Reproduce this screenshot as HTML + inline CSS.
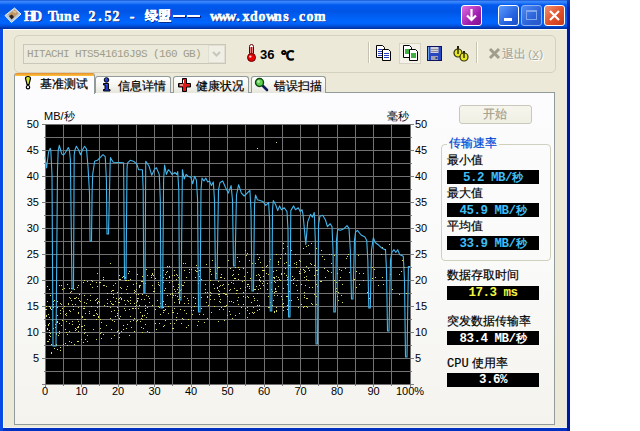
<!DOCTYPE html>
<html><head><meta charset="utf-8">
<style>
*{margin:0;padding:0;box-sizing:border-box}
html,body{width:640px;height:431px;overflow:hidden;background:#fff;font-family:"Liberation Sans",sans-serif;font-size:12px;color:#000}
.a{position:absolute}
#win{position:absolute;left:0;top:0;width:570px;height:431px;background:linear-gradient(90deg,#0A4AE4 0,#0A4AE4 3px,#0030C0 3px,#0030C0 567px,#001898 567px)}
#title{position:absolute;left:0;top:0;width:570px;height:29px;background:linear-gradient(#0A3FC4 0px,#3D8CFF 1px,#2A78F8 3px,#0058EE 5px,#0055E6 12px,#0062F8 18px,#0066FF 23px,#0050DC 26px,#0038B0 28px,#00309a 29px)}
#client{position:absolute;left:3px;top:29px;width:564px;height:399px;background:#ECE9D8;border-top:1px solid #fff;border-left:1px solid #F4F6FA;border-right:1px solid #DCE6F4;border-bottom:1px solid #F0F2F6}
.lbl{position:absolute;font-size:11px;line-height:13px;white-space:nowrap}
.tt i{font-style:normal;display:inline-block;width:8px;text-align:center}
.tt{position:absolute;font-family:"Liberation Serif",serif;font-weight:bold;font-size:14px;line-height:16px;-webkit-text-stroke:0.5px #fff;color:#fff;text-shadow:1px 1px 0 #0A1E80;white-space:nowrap}
.cj{position:absolute;font-size:12px;line-height:14px;white-space:nowrap;-webkit-text-stroke:0.2px currentColor}
.tab{position:absolute;top:76px;height:17px;border:1px solid #919B9C;border-bottom:none;border-radius:3px 3px 0 0;background:linear-gradient(#FFFFFF,#F3F3EF 60%,#E6E5DC)}
.box{position:absolute;left:447px;width:92px;height:14px;background:#000;font-family:"Liberation Mono",monospace;font-weight:bold;font-size:12.5px;letter-spacing:-0.5px;line-height:15px;text-align:center;white-space:nowrap}
.box b{font-family:"Liberation Sans",sans-serif;font-size:11px;letter-spacing:0}
.btn{position:absolute;top:5px;width:21px;height:21px;border:1px solid #fff;border-radius:3px}
</style></head><body>
<div id="win">
 <div id="title"></div>
 <div id="client"></div>
 <div class="a" style="left:567px;top:0;width:3px;height:29px;background:linear-gradient(#1040C8,#0022B0 30%,#0018A0)"></div>
 <!-- title icon -->
 <svg class="a" style="left:0;top:0" width="24" height="26" viewBox="0 0 24 26">
  <path d="M5 15.5 L14.5 8 L21 14 L11.5 22.5 Z" fill="#B8C8D8" stroke="#E8F0FF" stroke-width="1"/>
  <path d="M8 14.5 L14.5 9.5 L18.5 13.5 L12 19 Z" fill="#C09868"/>
  <path d="M9 16 L12 14.5 L14 17 L11.5 19.5 Z" fill="#2A2018"/>
  <path d="M13 11 l3 1.5" stroke="#E0C8A0" stroke-width="1.5"/>
 </svg>
 <div class="tt" style="left:24px;top:9px"><i>H</i><i>D</i><i>&nbsp;</i><i>T</i><i>u</i><i>n</i><i>e</i><i>&nbsp;</i><i>2</i><i>.</i><i>5</i><i>2</i><i>&nbsp;</i><i>-</i></div>
 <div class="tt" style="left:145px;top:7px;font-family:'Liberation Sans',sans-serif;font-size:13px;line-height:18px;letter-spacing:0px;-webkit-text-stroke:0.4px #fff">绿盟</div>
 <div class="a" style="left:173px;top:15px;width:12px;height:2px;background:#fff;box-shadow:1px 1px 0 #0A1E80"></div>
 <div class="a" style="left:187px;top:15px;width:13px;height:2px;background:#fff;box-shadow:1px 1px 0 #0A1E80"></div>
 <div class="tt" style="left:210px;top:9px"><i>w</i><i>w</i><i>w</i><i>.</i><i>x</i><i>d</i><i>o</i><i>w</i><i>n</i><i>s</i><i>.</i><i>c</i><i>o</i><i>m</i></div>
 <!-- title buttons -->
 <div class="btn" style="left:461px;background:linear-gradient(135deg,#E070E0,#A020B0 60%,#801090)"></div>
 <svg class="a" style="left:461px;top:5px" width="21" height="21"><path d="M10.5 4v11M6 10.5l4.5 4.5 4.5-4.5" stroke="#fff" stroke-width="2.2" fill="none"/></svg>
 <div class="btn" style="left:498px;background:linear-gradient(135deg,#5C9BFF,#2663E0 60%,#1A50C8)"></div>
 <div class="a" style="left:504px;top:18px;width:8px;height:3px;background:#fff"></div>
 <div class="btn" style="left:521px;background:linear-gradient(135deg,#4F8CF5,#2B62D8 60%,#2456C8);border-color:#8FB0F0"></div>
 <div class="a" style="left:526px;top:10px;width:11px;height:10px;border:1px solid #7FA6EE;border-top-width:2px"></div>
 <div class="btn" style="left:544px;background:linear-gradient(135deg,#F09070,#E0502A 55%,#C83A18)"></div>
 <svg class="a" style="left:544px;top:5px" width="21" height="21"><path d="M6 6l9 9M15 6l-9 9" stroke="#fff" stroke-width="2.2"/></svg>

 <!-- toolbar panel -->
 <div class="a" style="left:14px;top:35px;width:542px;height:38px;border:1px solid #D5D1BF;border-radius:5px;background:#ECE9D8"></div>
 <div class="a" style="left:23px;top:44px;width:203px;height:20px;border:1px solid #C9C7BA;background:#EBEADB"></div>
 <div class="a" style="left:27px;top:47px;font-family:'Liberation Mono',monospace;font-size:11px;letter-spacing:-0.6px;line-height:14px;color:#A09D88;white-space:nowrap">HITACHI HTS541616J9S (160 GB)</div>
 <div class="a" style="left:208px;top:45px;width:17px;height:18px;background:#F0EFE6;border:1px solid #E0DFD2"></div>
 <svg class="a" style="left:208px;top:45px" width="17" height="18"><path d="M5 7l3.5 3.5L12 7" stroke="#C9C7BA" stroke-width="2" fill="none"/></svg>
 <!-- thermometer -->
 <svg class="a" style="left:246px;top:44px" width="11" height="18" viewBox="0 0 11 18">
  <rect x="3.5" y="0.5" width="4" height="11" rx="2" fill="#fff" stroke="#600" stroke-width="1"/>
  <rect x="4.5" y="3" width="2" height="9" fill="#d00"/>
  <circle cx="5.5" cy="13.5" r="4" fill="#e00" stroke="#600" stroke-width="1"/>
  <circle cx="4.3" cy="12.6" r="1.2" fill="#fcc"/>
 </svg>
 <div class="a" style="left:260px;top:48px;font-weight:bold;font-size:13px;line-height:14px">36</div>
 <div class="a" style="left:281px;top:49px;font-weight:bold;font-size:13px;line-height:14px;-webkit-text-stroke:0.4px #000">℃</div>
 <!-- separators -->
 <div class="a" style="left:368px;top:42px;width:1px;height:21px;background:#C5C2B2;box-shadow:1px 0 0 #fff"></div>
 <div class="a" style="left:476px;top:42px;width:1px;height:21px;background:#C5C2B2;box-shadow:1px 0 0 #fff"></div>
 <!-- toolbar icons -->
 <svg class="a" style="left:375px;top:45px" width="18" height="16" viewBox="0 0 18 16">
  <path d="M1.5 0.5h6l2 2v10h-8z" fill="#fff" stroke="#000"/>
  <path d="M3 4.5h4M3 6.5h4M3 8.5h4M3 10.5h4" stroke="#2840c0"/>
  <path d="M7.5 4.5h6l2 2v9h-8z" fill="#fff" stroke="#000"/>
  <path d="M9 8.5h5M9 10.5h5M9 12.5h5" stroke="#2840c0"/>
 </svg>
 <div class="a" style="left:399px;top:43px;width:22px;height:21px;border:1px solid #D8D4C4;background:#F4F2E8"></div>
 <svg class="a" style="left:402px;top:45px" width="18" height="16" viewBox="0 0 18 16">
  <path d="M1.5 0.5h6l2 2v10h-8z" fill="#fff" stroke="#000"/>
  <rect x="3" y="4" width="4" height="5" fill="#40b040"/>
  <path d="M7.5 4.5h6l2 2v9h-8z" fill="#fff" stroke="#000"/>
  <rect x="9" y="8" width="5" height="5" fill="#40b040"/>
 </svg>
 <svg class="a" style="left:427px;top:46px" width="16" height="15" viewBox="0 0 16 15">
  <rect x="0.5" y="0.5" width="14" height="14" fill="#2846C0" stroke="#0A1460"/>
  <path d="M1.5 1v13" stroke="#70A0F0"/>
  <rect x="3.5" y="1" width="8" height="6" fill="#D0D0D8"/>
  <path d="M4 3.5h7M4 5.5h7" stroke="#9090A0"/>
  <rect x="4" y="10" width="7" height="4" fill="#A0A0B0"/>
  <rect x="8.5" y="11" width="2" height="2" fill="#304080"/>
 </svg>
 <svg class="a" style="left:452px;top:45px" width="18" height="17" viewBox="0 0 18 17">
  <path d="M6 1v6M12 6v6" stroke="#202010" stroke-width="2"/>
  <circle cx="6" cy="8" r="4" fill="#E8E820" stroke="#303010" stroke-width="1.2"/>
  <circle cx="12" cy="12" r="4" fill="#E8E820" stroke="#303010" stroke-width="1.2"/>
  <path d="M6 4v5M12 8v5" stroke="#303010" stroke-width="1.5"/>
 </svg>
 <svg class="a" style="left:488px;top:47px" width="13" height="13" viewBox="0 0 13 13"><path d="M2 2l9 9M11 2l-9 9" stroke="#A09D8E" stroke-width="3"/></svg>
 <div class="cj" style="left:502px;top:47px;color:#A8A598;text-shadow:1px 1px 0 #fff">退出</div>
 <div class="a" style="left:527px;top:48px;font-family:'Liberation Mono',monospace;font-size:11px;letter-spacing:-1.2px;line-height:14px;color:#A8A598;text-shadow:1px 1px 0 #fff">(<u>X</u>)</div>

 <!-- tab panel -->
 <div class="a" style="left:14px;top:92px;width:541px;height:333px;border:1px solid #919B9C;border-right-color:#919B9C;background:linear-gradient(#FCFCFE,#FAFAF9 50%,#F4F3EE)"></div>
 <div class="tab" style="left:95px;width:76px"></div>
 <div class="tab" style="left:173px;width:76px"></div>
 <div class="tab" style="left:251px;width:75px"></div>
 <div class="a" style="left:14px;top:73px;width:81px;height:21px;border:1px solid #919B9C;border-bottom:none;border-radius:3px 3px 0 0;background:#FCFCFE"></div>
 <div class="a" style="left:15px;top:73px;width:79px;height:3px;background:linear-gradient(#E68B2C,#FFC73C);border-radius:2px 2px 0 0"></div>
 <!-- tab icons -->
 <svg class="a" style="left:20px;top:74px" width="16" height="18" viewBox="0 0 16 18"><path d="M5.5 4.5Q5.5 2.5 8 2.5Q10.5 2.5 10.5 4.5L9 10.5H7Z" fill="#D8E030" stroke="#000" stroke-width="1.2"/><circle cx="8" cy="13.2" r="1.7" fill="#fff" stroke="#000" stroke-width="1.2"/></svg>
 <div class="cj" style="left:40px;top:77px">基准测试</div>
 <svg class="a" style="left:102px;top:77px" width="9" height="15" viewBox="0 0 9 15"><circle cx="4.5" cy="3" r="2.3" fill="#1838D8" stroke="#000" stroke-width="1"/><path d="M1.5 6.5h5v6h1.5v1.5h-6.5v-1.5h1.5v-4.5h-1.5z" fill="#1838D8" stroke="#000" stroke-width="1"/><path d="M3.6 2.3l0.8-0.6M4.3 8l0.6-0.6" stroke="#A0B8FF" stroke-width="0.9"/></svg>
 <div class="cj" style="left:118px;top:79px">信息详情</div>
 <svg class="a" style="left:178px;top:78px" width="13" height="14" viewBox="0 0 13 14"><path d="M4.5 0.5h4v5h4v3.5h-4v4.5h-4v-4.5h-4v-3.5h4z" fill="#E01818" stroke="#000" stroke-width="1"/><path d="M2 7h3M5.5 2v3" stroke="#fff" stroke-width="1"/></svg>
 <div class="cj" style="left:196px;top:79px">健康状况</div>
 <svg class="a" style="left:254px;top:77px" width="15" height="15" viewBox="0 0 15 15"><path d="M8.5 8.5l4.5 4.5" stroke="#101858" stroke-width="2.6" stroke-linecap="round"/><circle cx="5.5" cy="5.5" r="4" fill="#5CD050" stroke="#0E4A10" stroke-width="1.4"/><circle cx="4.5" cy="4.5" r="1.3" fill="#C8F0B0"/></svg>
 <div class="cj" style="left:274px;top:79px">错误扫描</div>

 <!-- chart -->
 <svg class="a" style="left:0;top:0" width="640" height="431" shape-rendering="crispEdges">
<rect x="45" y="124" width="366" height="261" fill="#000"/>
<path d="M45.5 124V385M63.5 124V385M81.5 124V385M99.5 124V385M118.5 124V385M136.5 124V385M154.5 124V385M172.5 124V385M191.5 124V385M209.5 124V385M227.5 124V385M245.5 124V385M264.5 124V385M282.5 124V385M300.5 124V385M318.5 124V385M337.5 124V385M355.5 124V385M373.5 124V385M391.5 124V385M410.5 124V385M45 124.5H411M45 137.5H411M45 150.5H411M45 163.5H411M45 176.5H411M45 189.5H411M45 202.5H411M45 215.5H411M45 228.5H411M45 241.5H411M45 254.5H411M45 267.5H411M45 280.5H411M45 293.5H411M45 306.5H411M45 319.5H411M45 332.5H411M45 345.5H411M45 358.5H411M45 371.5H411M45 384.5H411" stroke="#727272" stroke-width="1" fill="none"/>
<path d="M42 124.5H45M411 124.5H414M44 137.5H45M411 137.5H412M42 150.5H45M411 150.5H414M44 163.5H45M411 163.5H412M42 176.5H45M411 176.5H414M44 189.5H45M411 189.5H412M42 202.5H45M411 202.5H414M44 215.5H45M411 215.5H412M42 228.5H45M411 228.5H414M44 241.5H45M411 241.5H412M42 254.5H45M411 254.5H414M44 267.5H45M411 267.5H412M42 280.5H45M411 280.5H414M44 293.5H45M411 293.5H412M42 306.5H45M411 306.5H414M44 319.5H45M411 319.5H412M42 332.5H45M411 332.5H414M44 345.5H45M411 345.5H412M42 358.5H45M411 358.5H414M44 371.5H45M411 371.5H412M42 384.5H45M411 384.5H414M45.5 385V387M63.5 385V386M81.5 385V387M99.5 385V386M118.5 385V387M136.5 385V386M154.5 385V387M172.5 385V386M191.5 385V387M209.5 385V386M227.5 385V387M245.5 385V386M264.5 385V387M282.5 385V386M300.5 385V387M318.5 385V386M337.5 385V387M355.5 385V386M373.5 385V387M391.5 385V386M410.5 385V387" stroke="#808080" stroke-width="1" fill="none"/>
<path d="M45 309h1v1h-1zM45 325h1v1h-1zM46 306h1v1h-1zM46 309h1v1h-1zM46 315h1v1h-1zM46 316h1v1h-1zM47 286h1v1h-1zM47 301h1v1h-1zM47 328h1v1h-1zM47 329h1v1h-1zM47 341h1v1h-1zM48 314h1v1h-1zM48 324h1v1h-1zM48 325h1v1h-1zM48 341h1v1h-1zM49 289h1v1h-1zM49 306h1v1h-1zM49 317h1v1h-1zM49 323h1v1h-1zM49 330h1v1h-1zM49 332h1v1h-1zM49 335h1v1h-1zM49 339h1v1h-1zM50 295h1v1h-1zM50 307h1v1h-1zM50 308h1v1h-1zM50 333h1v1h-1zM50 336h1v1h-1zM51 309h1v1h-1zM51 344h1v1h-1zM51 352h1v1h-1zM51 353h1v1h-1zM52 306h1v1h-1zM52 320h1v1h-1zM53 301h1v1h-1zM53 304h1v1h-1zM53 307h1v1h-1zM53 328h1v1h-1zM54 300h1v1h-1zM54 348h1v1h-1zM55 324h1v1h-1zM55 327h1v1h-1zM56 283h1v1h-1zM56 319h1v1h-1zM56 322h1v1h-1zM56 333h1v1h-1zM56 334h1v1h-1zM56 344h1v1h-1zM56 345h1v1h-1zM57 301h1v1h-1zM57 307h1v1h-1zM57 315h1v1h-1zM57 321h1v1h-1zM57 322h1v1h-1zM57 349h1v1h-1zM58 335h1v1h-1zM59 285h1v1h-1zM59 323h1v1h-1zM59 331h1v1h-1zM59 333h1v1h-1zM60 303h1v1h-1zM60 310h1v1h-1zM60 313h1v1h-1zM60 347h1v1h-1zM60 350h1v1h-1zM61 285h1v1h-1zM61 304h1v1h-1zM61 325h1v1h-1zM62 289h1v1h-1zM62 308h1v1h-1zM62 320h1v1h-1zM63 311h1v1h-1zM63 344h1v1h-1zM64 288h1v1h-1zM64 306h1v1h-1zM65 314h1v1h-1zM65 329h1v1h-1zM65 343h1v1h-1zM66 313h1v1h-1zM66 315h1v1h-1zM66 321h1v1h-1zM66 332h1v1h-1zM67 284h1v1h-1zM67 334h1v1h-1zM67 345h1v1h-1zM68 303h1v1h-1zM68 304h1v1h-1zM69 288h1v1h-1zM69 297h1v1h-1zM69 310h1v1h-1zM69 323h1v1h-1zM69 331h1v1h-1zM69 341h1v1h-1zM70 292h1v1h-1zM70 298h1v1h-1zM70 311h1v1h-1zM71 288h1v1h-1zM71 291h1v1h-1zM71 300h1v1h-1zM71 342h1v1h-1zM72 304h1v1h-1zM72 321h1v1h-1zM72 324h1v1h-1zM73 306h1v1h-1zM73 309h1v1h-1zM74 289h1v1h-1zM74 298h1v1h-1zM74 344h1v1h-1zM75 298h1v1h-1zM75 304h1v1h-1zM75 328h1v1h-1zM75 330h1v1h-1zM76 297h1v1h-1zM76 329h1v1h-1zM77 287h1v1h-1zM77 319h1v1h-1zM77 327h1v1h-1zM77 341h1v1h-1zM78 285h1v1h-1zM78 298h1v1h-1zM78 307h1v1h-1zM78 312h1v1h-1zM78 313h1v1h-1zM78 321h1v1h-1zM78 326h1v1h-1zM78 327h1v1h-1zM78 331h1v1h-1zM78 341h1v1h-1zM79 294h1v1h-1zM79 300h1v1h-1zM79 324h1v1h-1zM80 301h1v1h-1zM81 306h1v1h-1zM81 326h1v1h-1zM81 339h1v1h-1zM82 316h1v1h-1zM82 317h1v1h-1zM82 326h1v1h-1zM83 282h1v1h-1zM83 308h1v1h-1zM83 342h1v1h-1zM84 280h1v1h-1zM84 295h1v1h-1zM84 302h1v1h-1zM84 306h1v1h-1zM84 308h1v1h-1zM84 319h1v1h-1zM84 325h1v1h-1zM84 329h1v1h-1zM84 333h1v1h-1zM85 313h1v1h-1zM85 319h1v1h-1zM85 332h1v1h-1zM85 339h1v1h-1zM86 303h1v1h-1zM87 281h1v1h-1zM87 299h1v1h-1zM87 335h1v1h-1zM87 341h1v1h-1zM89 311h1v1h-1zM89 313h1v1h-1zM90 284h1v1h-1zM90 295h1v1h-1zM90 300h1v1h-1zM91 280h1v1h-1zM91 306h1v1h-1zM92 281h1v1h-1zM92 287h1v1h-1zM93 315h1v1h-1zM93 329h1v1h-1zM94 315h1v1h-1zM95 300h1v1h-1zM95 310h1v1h-1zM96 282h1v1h-1zM96 299h1v1h-1zM96 313h1v1h-1zM96 319h1v1h-1zM96 339h1v1h-1zM97 273h1v1h-1zM97 286h1v1h-1zM97 298h1v1h-1zM97 302h1v1h-1zM97 303h1v1h-1zM97 307h1v1h-1zM97 314h1v1h-1zM98 301h1v1h-1zM98 316h1v1h-1zM98 317h1v1h-1zM99 282h1v1h-1zM99 302h1v1h-1zM99 306h1v1h-1zM100 282h1v1h-1zM100 319h1v1h-1zM100 328h1v1h-1zM100 333h1v1h-1zM101 322h1v1h-1zM101 332h1v1h-1zM101 338h1v1h-1zM103 277h1v1h-1zM103 279h1v1h-1zM103 285h1v1h-1zM103 334h1v1h-1zM104 285h1v1h-1zM104 305h1v1h-1zM106 286h1v1h-1zM106 325h1v1h-1zM107 293h1v1h-1zM107 299h1v1h-1zM107 303h1v1h-1zM107 306h1v1h-1zM110 263h1v1h-1zM110 301h1v1h-1zM110 307h1v1h-1zM110 318h1v1h-1zM111 291h1v1h-1zM111 293h1v1h-1zM111 303h1v1h-1zM111 311h1v1h-1zM111 329h1v1h-1zM111 338h1v1h-1zM112 290h1v1h-1zM112 304h1v1h-1zM112 320h1v1h-1zM113 285h1v1h-1zM113 290h1v1h-1zM113 294h1v1h-1zM113 297h1v1h-1zM113 304h1v1h-1zM114 310h1v1h-1zM114 321h1v1h-1zM114 335h1v1h-1zM115 283h1v1h-1zM115 301h1v1h-1zM115 316h1v1h-1zM116 298h1v1h-1zM117 292h1v1h-1zM117 307h1v1h-1zM117 313h1v1h-1zM117 315h1v1h-1zM117 331h1v1h-1zM118 299h1v1h-1zM118 302h1v1h-1zM118 310h1v1h-1zM118 330h1v1h-1zM119 275h1v1h-1zM119 279h1v1h-1zM119 298h1v1h-1zM119 302h1v1h-1zM119 318h1v1h-1zM119 333h1v1h-1zM119 337h1v1h-1zM120 279h1v1h-1zM120 287h1v1h-1zM120 297h1v1h-1zM120 316h1v1h-1zM121 288h1v1h-1zM121 293h1v1h-1zM121 298h1v1h-1zM121 299h1v1h-1zM121 331h1v1h-1zM122 277h1v1h-1zM123 276h1v1h-1zM123 325h1v1h-1zM123 329h1v1h-1zM124 300h1v1h-1zM124 308h1v1h-1zM125 277h1v1h-1zM125 280h1v1h-1zM125 304h1v1h-1zM125 310h1v1h-1zM126 280h1v1h-1zM126 289h1v1h-1zM126 328h1v1h-1zM127 286h1v1h-1zM127 293h1v1h-1zM127 300h1v1h-1zM127 324h1v1h-1zM128 273h1v1h-1zM128 280h1v1h-1zM128 301h1v1h-1zM129 271h1v1h-1zM129 309h1v1h-1zM129 335h1v1h-1zM130 279h1v1h-1zM130 297h1v1h-1zM130 300h1v1h-1zM130 303h1v1h-1zM130 316h1v1h-1zM130 321h1v1h-1zM131 327h1v1h-1zM132 308h1v1h-1zM133 284h1v1h-1zM133 308h1v1h-1zM133 320h1v1h-1zM134 290h1v1h-1zM134 292h1v1h-1zM134 303h1v1h-1zM134 318h1v1h-1zM134 331h1v1h-1zM135 291h1v1h-1zM135 306h1v1h-1zM135 308h1v1h-1zM136 283h1v1h-1zM136 289h1v1h-1zM136 294h1v1h-1zM136 302h1v1h-1zM136 305h1v1h-1zM136 321h1v1h-1zM137 274h1v1h-1zM137 298h1v1h-1zM137 300h1v1h-1zM137 301h1v1h-1zM137 320h1v1h-1zM138 294h1v1h-1zM138 298h1v1h-1zM138 308h1v1h-1zM139 285h1v1h-1zM139 286h1v1h-1zM139 287h1v1h-1zM139 305h1v1h-1zM140 285h1v1h-1zM140 312h1v1h-1zM140 321h1v1h-1zM141 281h1v1h-1zM141 299h1v1h-1zM141 318h1v1h-1zM141 327h1v1h-1zM142 276h1v1h-1zM142 281h1v1h-1zM142 294h1v1h-1zM142 315h1v1h-1zM142 316h1v1h-1zM142 319h1v1h-1zM142 332h1v1h-1zM143 283h1v1h-1zM143 328h1v1h-1zM144 299h1v1h-1zM144 315h1v1h-1zM145 283h1v1h-1zM145 305h1v1h-1zM145 308h1v1h-1zM145 310h1v1h-1zM145 324h1v1h-1zM146 269h1v1h-1zM146 295h1v1h-1zM146 317h1v1h-1zM147 275h1v1h-1zM147 307h1v1h-1zM147 313h1v1h-1zM147 331h1v1h-1zM148 296h1v1h-1zM149 298h1v1h-1zM149 302h1v1h-1zM149 332h1v1h-1zM151 275h1v1h-1zM151 277h1v1h-1zM152 273h1v1h-1zM152 274h1v1h-1zM152 285h1v1h-1zM152 305h1v1h-1zM153 275h1v1h-1zM153 291h1v1h-1zM154 269h1v1h-1zM154 288h1v1h-1zM154 291h1v1h-1zM155 278h1v1h-1zM155 309h1v1h-1zM155 323h1v1h-1zM156 329h1v1h-1zM157 300h1v1h-1zM158 282h1v1h-1zM158 284h1v1h-1zM158 306h1v1h-1zM159 285h1v1h-1zM159 307h1v1h-1zM159 323h1v1h-1zM160 275h1v1h-1zM160 291h1v1h-1zM160 303h1v1h-1zM160 314h1v1h-1zM163 270h1v1h-1zM163 277h1v1h-1zM163 282h1v1h-1zM163 301h1v1h-1zM163 307h1v1h-1zM163 310h1v1h-1zM163 312h1v1h-1zM163 326h1v1h-1zM164 290h1v1h-1zM164 310h1v1h-1zM164 325h1v1h-1zM165 274h1v1h-1zM165 288h1v1h-1zM165 304h1v1h-1zM165 309h1v1h-1zM165 320h1v1h-1zM166 272h1v1h-1zM166 278h1v1h-1zM167 266h1v1h-1zM167 271h1v1h-1zM167 295h1v1h-1zM168 306h1v1h-1zM168 313h1v1h-1zM169 266h1v1h-1zM169 276h1v1h-1zM169 277h1v1h-1zM169 282h1v1h-1zM170 294h1v1h-1zM170 323h1v1h-1zM172 275h1v1h-1zM172 281h1v1h-1zM172 293h1v1h-1zM172 294h1v1h-1zM172 297h1v1h-1zM172 310h1v1h-1zM172 312h1v1h-1zM172 328h1v1h-1zM173 286h1v1h-1zM173 295h1v1h-1zM173 312h1v1h-1zM173 328h1v1h-1zM174 270h1v1h-1zM174 275h1v1h-1zM174 289h1v1h-1zM174 302h1v1h-1zM174 308h1v1h-1zM174 323h1v1h-1zM175 291h1v1h-1zM175 295h1v1h-1zM176 274h1v1h-1zM176 279h1v1h-1zM176 317h1v1h-1zM176 320h1v1h-1zM177 275h1v1h-1zM177 289h1v1h-1zM177 296h1v1h-1zM177 313h1v1h-1zM178 277h1v1h-1zM178 284h1v1h-1zM178 287h1v1h-1zM178 292h1v1h-1zM178 299h1v1h-1zM179 278h1v1h-1zM179 285h1v1h-1zM179 294h1v1h-1zM179 301h1v1h-1zM179 302h1v1h-1zM179 303h1v1h-1zM180 290h1v1h-1zM180 297h1v1h-1zM180 309h1v1h-1zM181 284h1v1h-1zM181 289h1v1h-1zM181 323h1v1h-1zM182 285h1v1h-1zM182 318h1v1h-1zM183 263h1v1h-1zM183 285h1v1h-1zM183 319h1v1h-1zM184 270h1v1h-1zM184 282h1v1h-1zM184 296h1v1h-1zM184 303h1v1h-1zM184 310h1v1h-1zM185 263h1v1h-1zM186 277h1v1h-1zM186 313h1v1h-1zM186 327h1v1h-1zM187 298h1v1h-1zM188 300h1v1h-1zM188 303h1v1h-1zM188 319h1v1h-1zM188 325h1v1h-1zM189 269h1v1h-1zM189 272h1v1h-1zM191 269h1v1h-1zM191 307h1v1h-1zM191 310h1v1h-1zM192 314h1v1h-1zM193 297h1v1h-1zM193 310h1v1h-1zM194 306h1v1h-1zM195 270h1v1h-1zM195 277h1v1h-1zM195 298h1v1h-1zM195 303h1v1h-1zM196 265h1v1h-1zM196 271h1v1h-1zM197 268h1v1h-1zM197 271h1v1h-1zM197 325h1v1h-1zM198 274h1v1h-1zM198 283h1v1h-1zM198 295h1v1h-1zM198 299h1v1h-1zM198 301h1v1h-1zM198 321h1v1h-1zM199 270h1v1h-1zM199 276h1v1h-1zM199 280h1v1h-1zM199 314h1v1h-1zM200 261h1v1h-1zM200 270h1v1h-1zM201 279h1v1h-1zM201 297h1v1h-1zM201 308h1v1h-1zM203 314h1v1h-1zM204 322h1v1h-1zM205 284h1v1h-1zM205 289h1v1h-1zM205 292h1v1h-1zM206 264h1v1h-1zM206 302h1v1h-1zM207 292h1v1h-1zM207 296h1v1h-1zM207 297h1v1h-1zM207 318h1v1h-1zM208 305h1v1h-1zM210 269h1v1h-1zM210 271h1v1h-1zM210 280h1v1h-1zM210 292h1v1h-1zM210 295h1v1h-1zM210 299h1v1h-1zM211 274h1v1h-1zM211 293h1v1h-1zM211 312h1v1h-1zM212 260h1v1h-1zM213 284h1v1h-1zM214 288h1v1h-1zM214 299h1v1h-1zM214 306h1v1h-1zM215 264h1v1h-1zM215 266h1v1h-1zM216 273h1v1h-1zM217 268h1v1h-1zM217 287h1v1h-1zM217 288h1v1h-1zM218 267h1v1h-1zM218 281h1v1h-1zM218 290h1v1h-1zM218 294h1v1h-1zM218 321h1v1h-1zM219 267h1v1h-1zM219 286h1v1h-1zM219 291h1v1h-1zM219 294h1v1h-1zM219 296h1v1h-1zM219 301h1v1h-1zM219 309h1v1h-1zM220 277h1v1h-1zM220 285h1v1h-1zM220 299h1v1h-1zM220 302h1v1h-1zM221 274h1v1h-1zM221 277h1v1h-1zM221 307h1v1h-1zM222 285h1v1h-1zM223 284h1v1h-1zM223 293h1v1h-1zM223 309h1v1h-1zM224 278h1v1h-1zM224 288h1v1h-1zM224 293h1v1h-1zM224 306h1v1h-1zM224 320h1v1h-1zM225 294h1v1h-1zM225 306h1v1h-1zM226 294h1v1h-1zM226 305h1v1h-1zM227 296h1v1h-1zM227 315h1v1h-1zM228 260h1v1h-1zM228 284h1v1h-1zM229 290h1v1h-1zM229 301h1v1h-1zM229 311h1v1h-1zM230 268h1v1h-1zM230 289h1v1h-1zM230 314h1v1h-1zM231 282h1v1h-1zM231 301h1v1h-1zM232 275h1v1h-1zM232 318h1v1h-1zM233 270h1v1h-1zM233 274h1v1h-1zM233 280h1v1h-1zM233 283h1v1h-1zM233 302h1v1h-1zM234 278h1v1h-1zM234 288h1v1h-1zM235 267h1v1h-1zM235 278h1v1h-1zM235 315h1v1h-1zM236 290h1v1h-1zM236 293h1v1h-1zM237 257h1v1h-1zM237 290h1v1h-1zM237 300h1v1h-1zM238 267h1v1h-1zM238 274h1v1h-1zM238 279h1v1h-1zM238 297h1v1h-1zM238 304h1v1h-1zM239 261h1v1h-1zM239 269h1v1h-1zM239 313h1v1h-1zM240 288h1v1h-1zM241 307h1v1h-1zM242 281h1v1h-1zM243 268h1v1h-1zM243 292h1v1h-1zM243 296h1v1h-1zM243 304h1v1h-1zM244 276h1v1h-1zM244 280h1v1h-1zM245 250h1v1h-1zM245 287h1v1h-1zM245 290h1v1h-1zM245 297h1v1h-1zM245 308h1v1h-1zM246 255h1v1h-1zM247 253h1v1h-1zM247 272h1v1h-1zM247 284h1v1h-1zM247 286h1v1h-1zM247 296h1v1h-1zM247 307h1v1h-1zM247 310h1v1h-1zM247 317h1v1h-1zM248 284h1v1h-1zM248 297h1v1h-1zM249 260h1v1h-1zM249 286h1v1h-1zM249 288h1v1h-1zM249 313h1v1h-1zM250 278h1v1h-1zM251 302h1v1h-1zM252 263h1v1h-1zM252 312h1v1h-1zM253 281h1v1h-1zM253 296h1v1h-1zM253 307h1v1h-1zM253 313h1v1h-1zM254 289h1v1h-1zM254 298h1v1h-1zM254 300h1v1h-1zM254 312h1v1h-1zM255 263h1v1h-1zM255 289h1v1h-1zM256 275h1v1h-1zM256 286h1v1h-1zM257 254h1v1h-1zM257 293h1v1h-1zM257 300h1v1h-1zM257 305h1v1h-1zM257 310h1v1h-1zM258 259h1v1h-1zM258 274h1v1h-1zM258 289h1v1h-1zM259 257h1v1h-1zM259 275h1v1h-1zM259 279h1v1h-1zM259 280h1v1h-1zM259 285h1v1h-1zM259 305h1v1h-1zM259 309h1v1h-1zM260 262h1v1h-1zM260 277h1v1h-1zM260 281h1v1h-1zM260 288h1v1h-1zM262 267h1v1h-1zM262 270h1v1h-1zM262 283h1v1h-1zM263 270h1v1h-1zM263 276h1v1h-1zM263 281h1v1h-1zM263 285h1v1h-1zM264 270h1v1h-1zM266 266h1v1h-1zM266 273h1v1h-1zM267 265h1v1h-1zM267 283h1v1h-1zM267 289h1v1h-1zM268 274h1v1h-1zM268 296h1v1h-1zM268 307h1v1h-1zM269 261h1v1h-1zM269 307h1v1h-1zM270 259h1v1h-1zM270 302h1v1h-1zM271 282h1v1h-1zM271 289h1v1h-1zM272 291h1v1h-1zM272 305h1v1h-1zM273 271h1v1h-1zM273 277h1v1h-1zM273 300h1v1h-1zM274 277h1v1h-1zM274 278h1v1h-1zM274 281h1v1h-1zM274 292h1v1h-1zM274 295h1v1h-1zM274 311h1v1h-1zM274 312h1v1h-1zM275 282h1v1h-1zM275 288h1v1h-1zM275 289h1v1h-1zM275 291h1v1h-1zM276 254h1v1h-1zM276 270h1v1h-1zM276 276h1v1h-1zM276 291h1v1h-1zM276 307h1v1h-1zM276 310h1v1h-1zM276 311h1v1h-1zM277 280h1v1h-1zM277 295h1v1h-1zM278 261h1v1h-1zM278 262h1v1h-1zM278 264h1v1h-1zM278 277h1v1h-1zM278 286h1v1h-1zM279 279h1v1h-1zM280 258h1v1h-1zM280 280h1v1h-1zM281 254h1v1h-1zM281 273h1v1h-1zM281 274h1v1h-1zM281 296h1v1h-1zM282 299h1v1h-1zM282 304h1v1h-1zM282 306h1v1h-1zM283 243h1v1h-1zM283 248h1v1h-1zM283 288h1v1h-1zM283 303h1v1h-1zM283 307h1v1h-1zM283 310h1v1h-1zM284 263h1v1h-1zM284 273h1v1h-1zM285 253h1v1h-1zM285 268h1v1h-1zM286 262h1v1h-1zM286 275h1v1h-1zM286 296h1v1h-1zM287 246h1v1h-1zM287 277h1v1h-1zM287 279h1v1h-1zM287 284h1v1h-1zM287 296h1v1h-1zM287 305h1v1h-1zM287 309h1v1h-1zM288 265h1v1h-1zM288 268h1v1h-1zM288 276h1v1h-1zM289 265h1v1h-1zM289 291h1v1h-1zM289 300h1v1h-1zM289 306h1v1h-1zM290 273h1v1h-1zM291 250h1v1h-1zM291 280h1v1h-1zM291 300h1v1h-1zM292 276h1v1h-1zM293 279h1v1h-1zM293 283h1v1h-1zM294 263h1v1h-1zM294 278h1v1h-1zM295 254h1v1h-1zM296 262h1v1h-1zM296 264h1v1h-1zM296 267h1v1h-1zM296 285h1v1h-1zM297 280h1v1h-1zM297 290h1v1h-1zM297 297h1v1h-1zM298 299h1v1h-1zM298 307h1v1h-1zM299 260h1v1h-1zM299 271h1v1h-1zM299 273h1v1h-1zM300 261h1v1h-1zM300 269h1v1h-1zM300 273h1v1h-1zM301 284h1v1h-1zM301 304h1v1h-1zM303 248h1v1h-1zM303 269h1v1h-1zM303 307h1v1h-1zM304 270h1v1h-1zM304 272h1v1h-1zM304 277h1v1h-1zM304 292h1v1h-1zM304 295h1v1h-1zM304 297h1v1h-1zM304 306h1v1h-1zM305 271h1v1h-1zM305 285h1v1h-1zM306 246h1v1h-1zM306 266h1v1h-1zM306 276h1v1h-1zM306 279h1v1h-1zM306 298h1v1h-1zM306 306h1v1h-1zM307 298h1v1h-1zM307 307h1v1h-1zM308 245h1v1h-1zM308 268h1v1h-1zM308 280h1v1h-1zM309 253h1v1h-1zM309 270h1v1h-1zM309 287h1v1h-1zM310 263h1v1h-1zM311 243h1v1h-1zM311 264h1v1h-1zM311 303h1v1h-1zM312 287h1v1h-1zM312 304h1v1h-1zM314 265h1v1h-1zM314 275h1v1h-1zM314 294h1v1h-1zM315 270h1v1h-1zM315 282h1v1h-1zM316 248h1v1h-1zM316 270h1v1h-1zM316 284h1v1h-1zM316 296h1v1h-1zM316 304h1v1h-1zM317 270h1v1h-1zM317 274h1v1h-1zM317 286h1v1h-1zM318 269h1v1h-1zM318 291h1v1h-1zM320 281h1v1h-1zM321 250h1v1h-1zM321 281h1v1h-1zM322 256h1v1h-1zM324 259h1v1h-1zM324 268h1v1h-1zM325 277h1v1h-1zM327 270h1v1h-1zM328 271h1v1h-1zM329 254h1v1h-1zM331 254h1v1h-1zM331 263h1v1h-1zM331 272h1v1h-1zM333 289h1v1h-1zM334 255h1v1h-1zM334 280h1v1h-1zM335 289h1v1h-1zM336 282h1v1h-1zM336 288h1v1h-1zM336 291h1v1h-1zM337 273h1v1h-1zM337 296h1v1h-1zM338 292h1v1h-1zM338 300h1v1h-1zM339 269h1v1h-1zM339 280h1v1h-1zM340 277h1v1h-1zM341 270h1v1h-1zM341 295h1v1h-1zM342 284h1v1h-1zM342 302h1v1h-1zM345 268h1v1h-1zM346 258h1v1h-1zM347 256h1v1h-1zM348 254h1v1h-1zM349 272h1v1h-1zM354 279h1v1h-1zM356 271h1v1h-1zM356 287h1v1h-1zM358 255h1v1h-1zM359 273h1v1h-1zM359 284h1v1h-1zM363 273h1v1h-1zM363 280h1v1h-1zM367 292h1v1h-1zM369 298h1v1h-1zM372 267h1v1h-1zM372 278h1v1h-1zM374 269h1v1h-1zM375 277h1v1h-1zM378 285h1v1h-1zM381 254h1v1h-1zM382 247h1v1h-1zM382 277h1v1h-1zM383 284h1v1h-1zM385 249h1v1h-1zM389 244h1v1h-1zM389 298h1v1h-1zM390 274h1v1h-1zM392 289h1v1h-1zM399 274h1v1h-1zM399 294h1v1h-1zM401 271h1v1h-1zM402 260h1v1h-1zM404 267h1v1h-1zM406 293h1v1h-1z" fill="#DCDC66"/>
<path d="M257 148h1.2v1.2h-1.2zM276 142h1.2v1.2h-1.2z" fill="#e0e0a0"/>
<polyline points="45,157 46.6,168 48.5,152.4 50.2,148.2 50.8,150 52,175 53,346 56,346 57.5,170 58.2,150.3 59.3,145.4 60.3,149 61.7,153.8 63.4,155.2 65.2,153 68.3,147.5 69.4,150 70.4,160 72,289 73.5,289 74.2,155 74.9,150 76.4,146.25 78.6,150 80.5,154.7 82.4,150 84.6,146.25 86.5,149 88,166.9 89.5,193 90,241 91.5,241 92.1,193 92.7,174.4 94.6,161.25 97.4,160.3 101.1,156.6 103,154.7 105.25,156.6 106.4,180 107,234 108.5,234 110.1,165 110.5,157.5 111.4,159.4 113.3,162.2 123.6,162.75 124.5,279 126,279 127,170 127.4,163.1 130.2,160.3 134,161.6 136.75,164 138.6,169.7 142.4,169.7 143.2,190 143.8,293 145,293 145.75,161.25 149,166 151.75,175.3 154.6,169 156.4,167.8 159.25,174.4 160.3,200 161,308 162.5,308 163.6,180 164.6,165 166.4,174.4 168.3,169.7 170.2,171.6 172,174.4 174.9,172.5 176.75,174.4 177.7,171.6 178.8,190 179.5,300 181,300 182.4,169.7 184.25,179 186.1,174.4 188,176.25 190.8,177.2 192.7,183.75 194.6,176.25 196.4,180 197.6,200 198.5,312 200,312 201,190 202,178.1 204,181 205.8,178.1 207.7,181.9 209.6,181 211.4,185.6 213.3,181.9 214.5,200 215.5,279 217,279 218.5,190 219.9,182.8 222.7,181 225.5,187.5 228.3,193.1 231.1,185.6 232.5,200 233.5,266 235,266 236.5,195 238.6,184.7 241.4,193.1 244.25,196 249.9,190.3 251,210 252,291 253.5,291 254.5,205 255.5,195 257.4,199.7 263,201.6 265.8,205.3 268.6,202.5 269.6,220 270.2,311 271.8,311 272.5,210 273.3,200.6 275.8,205 277.7,210.6 279.6,205.9 281.4,209.7 284.25,207.8 287,211.6 288,230 288.6,317 290,317 290.8,210.6 293.6,205.9 295.5,209.7 298.3,207.8 300.2,211.6 302,209.7 303,214.4 305.8,244.4 307.7,221.9 310.5,214.4 312.4,217.2 314.25,212.5 315.3,240 316,344 317.5,344 318.5,225 319.9,216.25 322.7,215.3 325.5,220 327.4,226.6 330.2,223.75 332,226.6 333,250 333.8,312 335.3,312 336.5,240 337.7,229.4 340.5,230.3 344.25,228.4 347,225.6 349,228.4 350.3,250 351.5,299 353,299 354.5,240 355.5,232.2 357.4,230.3 361.1,235 364.9,236.9 366.75,240.6 367.8,260 368.8,308 370.3,308 371.5,250 373.3,237.8 375.2,242.5 378.9,245.3 381.75,248.1 385.5,250 386.5,270 387.5,331 389,331 390.5,260 392,252 394,249.7 395.8,252.5 397.7,249.7 399.6,254.4 403.3,256.25 404.5,280 405.5,357 407,357 408.4,266.6 410.5,266.6" fill="none" stroke="#44B6EC" stroke-width="1.1" shape-rendering="auto" stroke-linejoin="round"/>
</svg>
 <div class="lbl" style="left:44px;top:110px">MB/秒</div>
 <div class="lbl" style="left:387px;top:110px">毫秒</div>
 <div class="lbl" style="left:0;width:39px;text-align:right;top:118px">50</div>
<div class="lbl" style="left:415px;top:118px">50</div>
<div class="lbl" style="left:0;width:39px;text-align:right;top:144px">45</div>
<div class="lbl" style="left:415px;top:144px">45</div>
<div class="lbl" style="left:0;width:39px;text-align:right;top:170px">40</div>
<div class="lbl" style="left:415px;top:170px">40</div>
<div class="lbl" style="left:0;width:39px;text-align:right;top:196px">35</div>
<div class="lbl" style="left:415px;top:196px">35</div>
<div class="lbl" style="left:0;width:39px;text-align:right;top:222px">30</div>
<div class="lbl" style="left:415px;top:222px">30</div>
<div class="lbl" style="left:0;width:39px;text-align:right;top:248px">25</div>
<div class="lbl" style="left:415px;top:248px">25</div>
<div class="lbl" style="left:0;width:39px;text-align:right;top:274px">20</div>
<div class="lbl" style="left:415px;top:274px">20</div>
<div class="lbl" style="left:0;width:39px;text-align:right;top:300px">15</div>
<div class="lbl" style="left:415px;top:300px">15</div>
<div class="lbl" style="left:0;width:39px;text-align:right;top:326px">10</div>
<div class="lbl" style="left:415px;top:326px">10</div>
<div class="lbl" style="left:0;width:39px;text-align:right;top:352px">5</div>
<div class="lbl" style="left:415px;top:352px">5</div>
<div class="lbl" style="left:15.0px;width:60px;text-align:center;top:385px">0</div>
<div class="lbl" style="left:51.5px;width:60px;text-align:center;top:385px">10</div>
<div class="lbl" style="left:88.0px;width:60px;text-align:center;top:385px">20</div>
<div class="lbl" style="left:124.5px;width:60px;text-align:center;top:385px">30</div>
<div class="lbl" style="left:161.0px;width:60px;text-align:center;top:385px">40</div>
<div class="lbl" style="left:197.5px;width:60px;text-align:center;top:385px">50</div>
<div class="lbl" style="left:234.0px;width:60px;text-align:center;top:385px">60</div>
<div class="lbl" style="left:270.5px;width:60px;text-align:center;top:385px">70</div>
<div class="lbl" style="left:307.0px;width:60px;text-align:center;top:385px">80</div>
<div class="lbl" style="left:343.5px;width:60px;text-align:center;top:385px">90</div>
<div class="lbl" style="left:396.0px;top:385px">100%</div>

 <!-- right panel -->
 <div class="a" style="left:459px;top:105px;width:73px;height:19px;border:1px solid #CAC8BB;border-radius:3px;background:linear-gradient(#F7F6EE,#F0EFE4)"></div>
 <div class="cj" style="left:483px;top:107px;color:#A3A08C">开始</div>
 <div class="a" style="left:441px;top:144px;width:110px;height:117px;border:1px solid #D0D0BF;border-radius:4px"></div>
 <div class="cj" style="left:447px;top:136px;padding:0 2px;background:#FAFAF9;color:#0046D5">传输速率</div>
 <div class="cj" style="left:447px;top:153px">最小值</div>
 <div class="box" style="top:170px;color:#3EBEF6">5.2 MB/<b>秒</b></div>
 <div class="cj" style="left:447px;top:186px">最大值</div>
 <div class="box" style="top:203px;color:#3EBEF6">45.9 MB/<b>秒</b></div>
 <div class="cj" style="left:447px;top:219px">平均值</div>
 <div class="box" style="top:236px;color:#3EBEF6">33.9 MB/<b>秒</b></div>
 <div class="cj" style="left:447px;top:268px">数据存取时间</div>
 <div class="box" style="top:286px;color:#F5F540">17.3 ms</div>
 <div class="cj" style="left:447px;top:314px">突发数据传输率</div>
 <div class="box" style="top:331px;color:#fff">83.4 MB/<b>秒</b></div>
 <div class="cj" style="left:447px;top:356px"><span style="font-family:'Liberation Mono',monospace;font-size:12px">CPU</span> 使用率</div>
 <div class="box" style="top:373px;color:#fff">3.6%</div>
</div>
</body></html>
